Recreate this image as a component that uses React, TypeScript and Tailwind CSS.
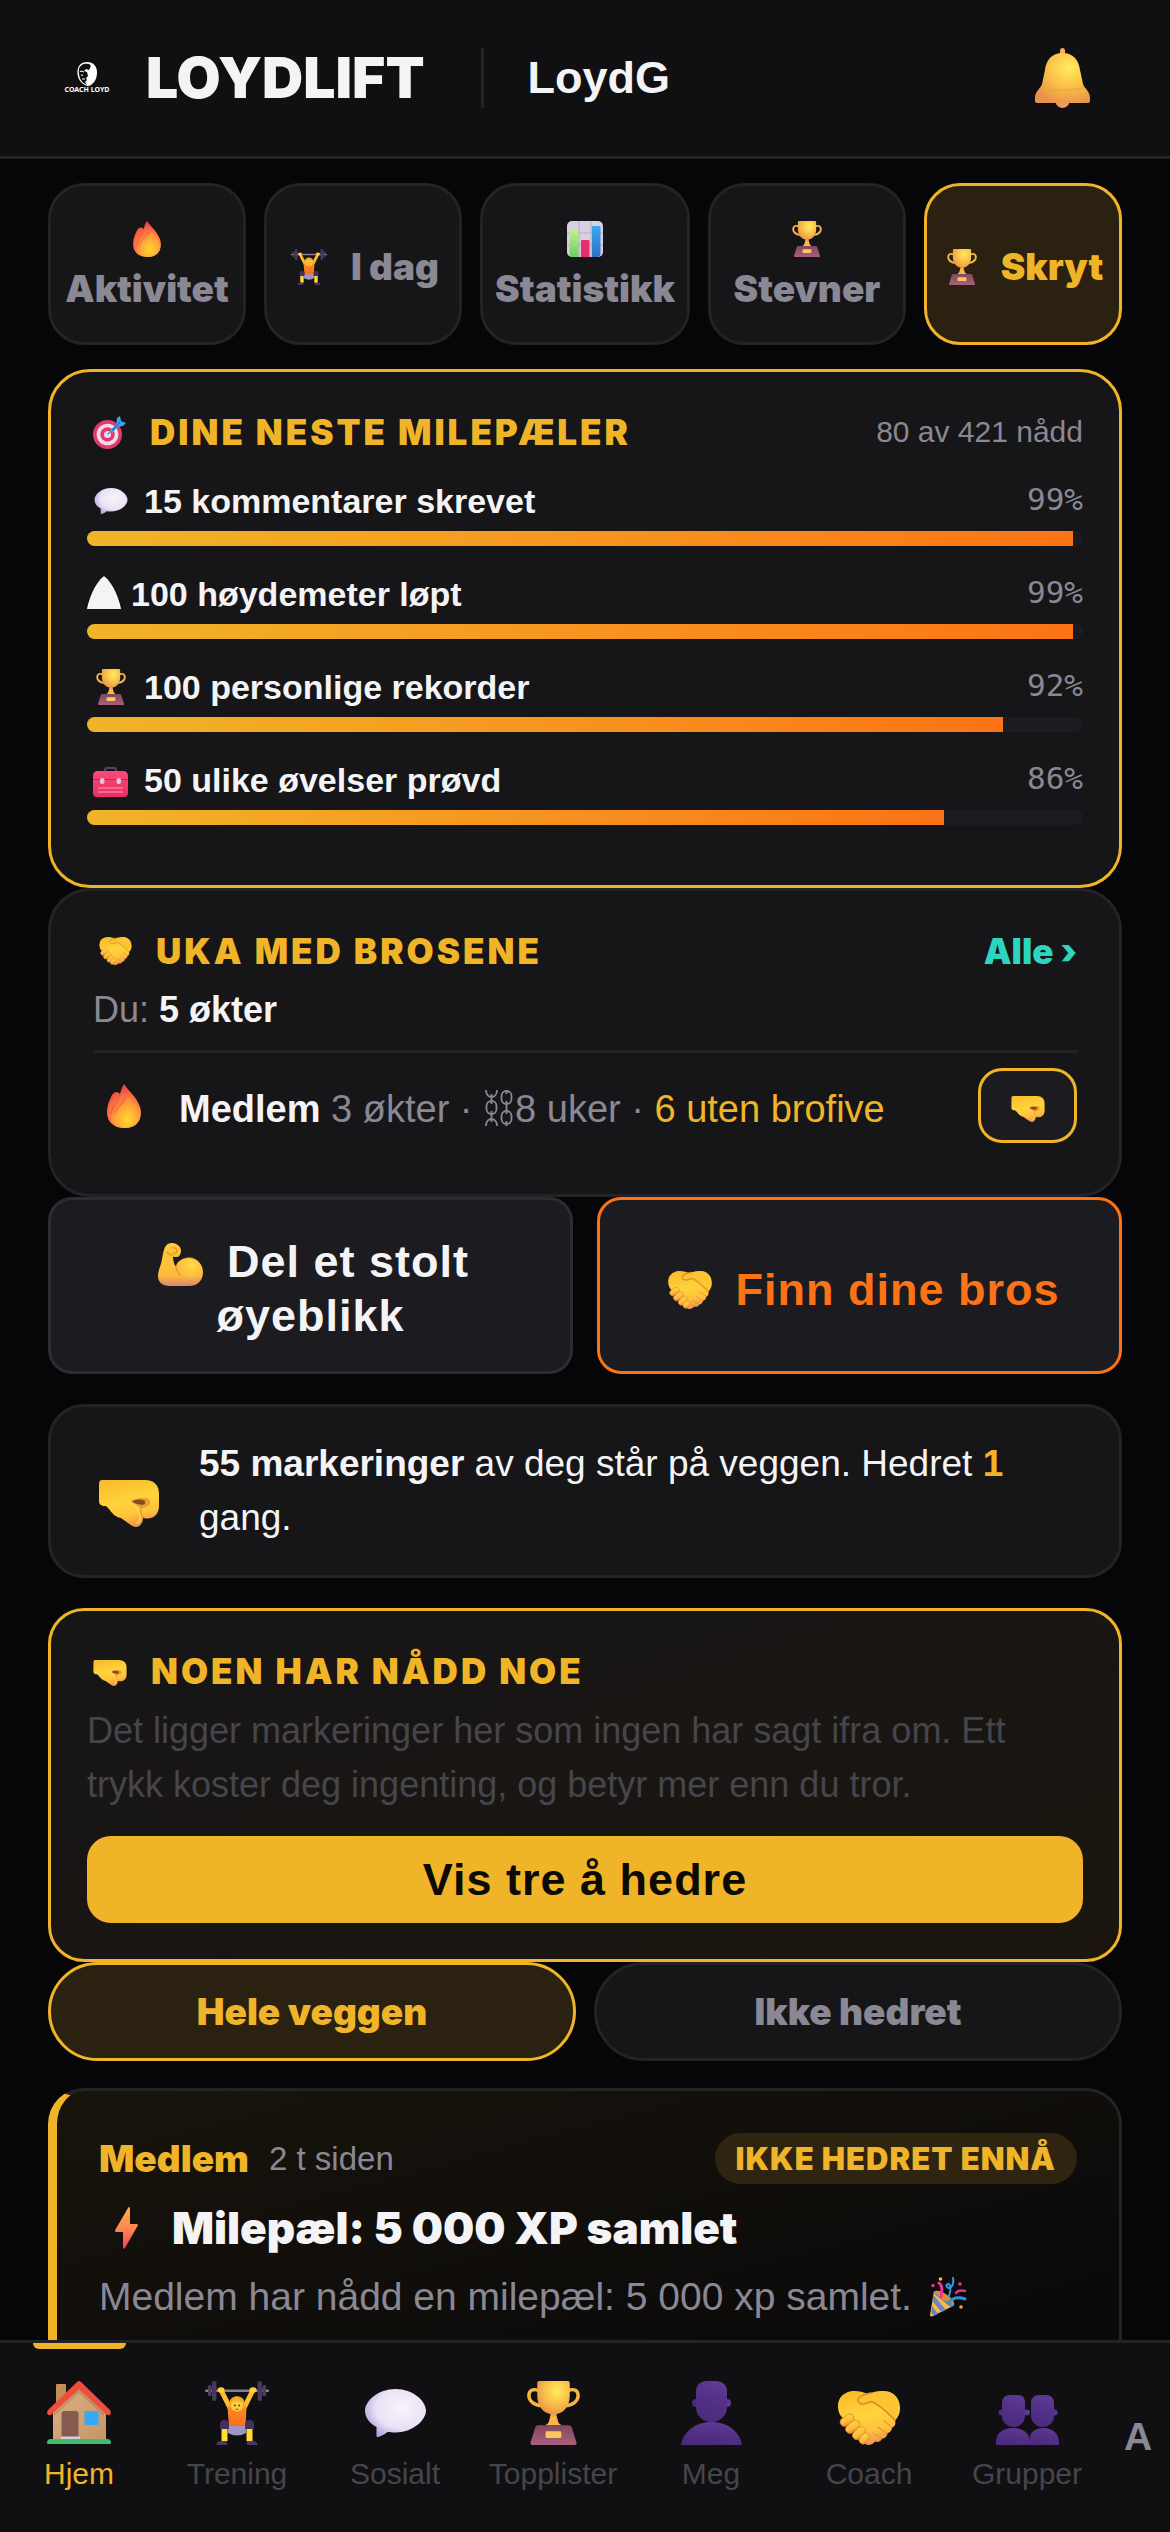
import type { ReactNode } from "react";

type ArtProps = { className: string };

const ARIAL = "font-['Liberation_Sans',Arial,sans-serif]";
const BLACK = "font-['Inter',sans-serif] font-black";

/* Gradients shared by every pictogram on the page. */
function Gradients() {
  return (
    <svg className="absolute h-0 w-0" aria-hidden="true">
      <defs>
        <radialGradient id="gold" cx="0.62" cy="0.3" r="0.75">
          <stop offset="0" stopColor="#ffec5e" />
          <stop offset="0.5" stopColor="#fbc149" />
          <stop offset="1" stopColor="#e8924a" />
        </radialGradient>
        <linearGradient id="skin" x1="0.3" y1="0" x2="0.6" y2="1">
          <stop offset="0" stopColor="#f8bd2b" />
          <stop offset="0.45" stopColor="#ffd33c" />
          <stop offset="0.75" stopColor="#ffc23b" />
          <stop offset="1" stopColor="#ef8f55" />
        </linearGradient>
        <linearGradient id="finger" x1="0.7" y1="0" x2="0.3" y2="1">
          <stop offset="0" stopColor="#ffd83f" />
          <stop offset="0.6" stopColor="#ffba3a" />
          <stop offset="1" stopColor="#ee8a4c" />
        </linearGradient>
        <radialGradient id="muscle" cx="0.6" cy="0.35" r="0.6">
          <stop offset="0" stopColor="#ffe04a" />
          <stop offset="1" stopColor="#ffc83d" stopOpacity="0" />
        </radialGradient>
        <linearGradient id="arm" x1="0.5" y1="0" x2="0.5" y2="1">
          <stop offset="0" stopColor="#ffc937" />
          <stop offset="0.75" stopColor="#fdbb3c" />
          <stop offset="1" stopColor="#d98672" />
        </linearGradient>
        <radialGradient id="fire" cx="0.6" cy="0.85" r="0.8">
          <stop offset="0" stopColor="#ffd62e" />
          <stop offset="0.4" stopColor="#ff9b3a" />
          <stop offset="0.75" stopColor="#fb6b45" />
          <stop offset="1" stopColor="#e9453f" />
        </radialGradient>
        <radialGradient id="fireCore" cx="0.55" cy="0.7" r="0.6">
          <stop offset="0" stopColor="#ffd92f" />
          <stop offset="1" stopColor="#ff8f3e" />
        </radialGradient>
        <radialGradient id="cloud" cx="0.6" cy="0.4" r="0.65">
          <stop offset="0" stopColor="#f8f3fc" />
          <stop offset="0.65" stopColor="#eae2f5" />
          <stop offset="1" stopColor="#b9a3dd" />
        </radialGradient>
        <linearGradient id="plinth" x1="0" y1="0" x2="0" y2="1">
          <stop offset="0" stopColor="#82485d" />
          <stop offset="1" stopColor="#a6617c" />
        </linearGradient>
        <linearGradient id="purple" x1="0.6" y1="0" x2="0.3" y2="1">
          <stop offset="0" stopColor="#5f3a95" />
          <stop offset="0.5" stopColor="#523085" />
          <stop offset="1" stopColor="#4b2a7e" />
        </linearGradient>
        <linearGradient id="wall" x1="0" y1="0" x2="1" y2="1">
          <stop offset="0" stopColor="#dcb083" />
          <stop offset="1" stopColor="#c69567" />
        </linearGradient>
        <linearGradient id="bolt" x1="0.5" y1="0" x2="0.5" y2="1">
          <stop offset="0" stopColor="#ffb04a" />
          <stop offset="0.55" stopColor="#ff8350" />
          <stop offset="1" stopColor="#ee4058" />
        </linearGradient>
        <linearGradient id="pink" x1="0" y1="0" x2="0" y2="1">
          <stop offset="0" stopColor="#fa4a78" />
          <stop offset="1" stopColor="#e52f60" />
        </linearGradient>
        <linearGradient id="shirt" x1="0" y1="0" x2="0" y2="1">
          <stop offset="0" stopColor="#ff8a2a" />
          <stop offset="1" stopColor="#fb6d1d" />
        </linearGradient>
        <linearGradient id="green" x1="0" y1="0" x2="0" y2="1">
          <stop offset="0" stopColor="#c5f08a" />
          <stop offset="1" stopColor="#69cf62" />
        </linearGradient>
        <linearGradient id="blue" x1="0" y1="0" x2="0" y2="1">
          <stop offset="0" stopColor="#3aaaf2" />
          <stop offset="1" stopColor="#2c6fc4" />
        </linearGradient>
      </defs>
    </svg>
  );
}

function Bell({ className }: ArtProps) {
  return (
    <svg viewBox="0 0 55 60" className={className} aria-hidden="true">
      <circle cx="27.5" cy="53" r="7" fill="#ee9a63" />
      <rect x="25" y="0" width="5" height="10" rx="2.5" fill="#f5b04c" />
      <path d="M27.500 5C38 5 44 12 45 22l3 14c1 4 7 7 7 14v3q0 2-2 2H2q-2 0-2-2v-3c0-7 6-10 7-14l3-14C11 12 17 5 27.500 5z" fill="url(#gold)" />
      <path d="M6 40c12 3 31 3 43 0" stroke="#f0a43f" strokeWidth="2" fill="none" opacity="0.7" />
    </svg>
  );
}

function Flame({ className }: ArtProps) {
  return (
    <svg viewBox="0 0 34 44" className={className} aria-hidden="true">
      <path d="M17 0c4 6 9 10 12 15 4 6 5 10 5 14 0 9-7 15-17 15S0 38 0 28C0 22 2 17 4 13c1-3 3-5 6-5 1 0 2 1 3 2 1-4 2-7 4-10z" fill="url(#fire)" />
      <path d="M16 20c3-3 5-6 6-8 6 8 11 14 11 20 0 7-6 12-14 12S5 39 5 33c0-5 6-8 11-13z" fill="url(#fireCore)" opacity="0.85" />
      <path d="M13 10c0 7-8 11-9 20M18 14c-2 6-8 9-10 16" stroke="#e85a33" strokeWidth="1.200" fill="none" opacity="0.6" />
    </svg>
  );
}

function Lifter({ className }: ArtProps) {
  return (
    <svg viewBox="0 0 64 64" className={className} aria-hidden="true">
      <rect x="0" y="8.500" width="64" height="2.500" rx="1" fill="#8a7b9c" />
      <rect x="3" y="4" width="3.500" height="11" rx="1.500" fill="#4d3e63" />
      <rect x="7" y="0" width="4.500" height="20" rx="2" fill="#463860" />
      <rect x="57.500" y="4" width="3.500" height="11" rx="1.500" fill="#4d3e63" />
      <rect x="52.500" y="0" width="4.500" height="20" rx="2" fill="#463860" />
      <path d="M16 9l9 18M48 9l-9 18" stroke="#fbbd2c" strokeWidth="5" strokeLinecap="round" />
      <rect x="12.500" y="6.500" width="7" height="5" rx="2.500" fill="#ffd23d" />
      <rect x="44.500" y="6.500" width="7" height="5" rx="2.500" fill="#ffd23d" />
      <path d="M22.500 26q9.500-4 19 0l-1 20H24z" fill="url(#shirt)" />
      <path d="M23 45h18v7q-9 5-18 0z" fill="#a094c2" />
      <path d="M24.500 22c0-9 15-9 15 0 0 3-1 6-3 7h-9c-2-1-3-4-3-7z" fill="#f2a32a" />
      <circle cx="32" cy="24.500" r="6" fill="#ffcf3a" />
      <path d="M25.500 22c1-6 12-6 13 0-4-2-9-2-13 0z" fill="#f6b02c" />
      <circle cx="29.800" cy="24.500" r="0.900" fill="#5b3a20" />
      <circle cx="34.200" cy="24.500" r="0.900" fill="#5b3a20" />
      <path d="M30.300 28q1.700 1 3.400 0" stroke="#9c4a1c" strokeWidth="0.900" fill="none" />
      <path d="M15 48v-4q0-5 4.500-5t4.500 5v4zM40 48v-4q0-5 4.500-5t4.500 5v4z" fill="#43305f" />
      <rect x="16.500" y="48" width="6" height="12" fill="#ffdd35" />
      <rect x="41.500" y="48" width="6" height="12" fill="#ffdd35" />
      <path d="M11.500 64q0-4 5-4h5.500v4zM52.500 64q0-4-5-4H42v4z" fill="#4a3670" />
    </svg>
  );
}

function Chart({ className }: ArtProps) {
  return (
    <svg viewBox="0 0 36 36" className={className} aria-hidden="true">
      <rect width="36" height="36" rx="5" fill="#d9cfe2" />
      <path d="M12 0v36M24 0v36M0 12h36M0 24h36" stroke="#b6a9c6" strokeWidth="1" />
      <path d="M2.500 10q0-1 1-1h7q1 0 1 1v26H5q-2.500-.500-2.500-3z" fill="url(#green)" />
      <path d="M14 36V20q0-1 1-1h6.500q1 0 1 1v16z" fill="#e2306c" />
      <path d="M25 6q0-1 1-1h6.500q1 0 1 1v27q0 2-2.500 3h-6z" fill="url(#blue)" />
    </svg>
  );
}

function Trophy({ className }: ArtProps) {
  return (
    <svg viewBox="0 0 53 65" className={className} aria-hidden="true">
      <path d="M12 10C5 7 1.500 10 1.500 15S7 25 15 25M41 10c7-3 10.500 0 10.500 5S46 25 38 25" stroke="#f6b544" strokeWidth="3.500" fill="none" />
      <path d="M21 45l3-13h5l3 13z" fill="#f5a94a" />
      <path d="M10 2q0-2 2-2h29q2 0 2 2v13c0 11-7 19-16.500 19S10 26 10 15z" fill="url(#gold)" />
      <path d="M18 45c4-2 5-5 6-9h5c1 4 2 7 6 9z" fill="#f9b74a" />
      <path d="M8 47q.500-2 3-2h31q2.500 0 3 2l5 16q0 2-2 2H5q-2 0-2-2z" fill="url(#plinth)" />
      <rect x="18.500" y="51" width="16" height="7" rx="1.500" fill="#fcc65f" />
    </svg>
  );
}

function Target({ className }: ArtProps) {
  return (
    <svg viewBox="0 0 33 33" className={className} aria-hidden="true">
      <circle cx="14.500" cy="18.500" r="14.500" fill="#e23a6d" />
      <circle cx="14.500" cy="18.500" r="10.800" fill="#f0dcec" />
      <circle cx="14.500" cy="18.500" r="7.200" fill="#e23a6d" />
      <circle cx="14.500" cy="18.500" r="3.500" fill="#f0dcec" />
      <path d="M14.500 18.500L24 9" stroke="#6f8fc7" strokeWidth="1.600" />
      <path d="M17 14l6-5 1-7 3-2 1 5 5 2-3 3-6 1-4 6z" fill="#3ea3ee" />
      <path d="M19 15l8-9" stroke="#1f74cc" strokeWidth="1.200" />
    </svg>
  );
}

function Bubble({ className }: ArtProps) {
  return (
    <svg viewBox="0 0 61 48" className={className} aria-hidden="true">
      <path d="M30.500 0C48 0 61 12 61 21.500S48 43.500 30.500 43.500c-3 0-6-.500-8-.500-3 2.500-6 4-9.500 5q-1.500.500-1.500-1.500v-8.500C4 34 0 28 0 21.500 0 12 13 0 30.500 0z" fill="url(#cloud)" />
    </svg>
  );
}

function Mountain({ className }: ArtProps) {
  return (
    <svg viewBox="0 0 34 33" className={className} aria-hidden="true">
      <path d="M17 0c5 4 9 10 12 17 2 5 4 10 5 16H0c1-6 3-11 5-16C8 10 12 4 17 0z" fill="#f4f4f6" />
    </svg>
  );
}

function Chains({ className }: ArtProps) {
  return (
    <svg viewBox="0 0 28 36" className={className} fill="none" stroke="currentColor" strokeWidth="1.800" aria-hidden="true">
      <path d="M1 0c0 5 3 7 5.500 7S12 5 12 0M1 36c0-5 3-7 5.500-7s5.500 2 5.500 7" />
      <rect x="1.500" y="11" width="10" height="13" rx="5" />
      <path d="M6.500 4v10M6.500 21v11" />
      <rect x="16.500" y="1" width="10" height="13" rx="5" />
      <rect x="16.500" y="21" width="10" height="13" rx="5" />
      <path d="M21.500 11v13M21.500 0v4M21.500 31v5" />
    </svg>
  );
}

function Toolbox({ className }: ArtProps) {
  return (
    <svg viewBox="0 0 35 30" className={className} aria-hidden="true">
      <path d="M12 5V3q0-2 2-2h7q2 0 2 2v2" stroke="#574366" strokeWidth="2" fill="none" />
      <path d="M0 9q0-5 5-5h25q5 0 5 5v17q0 4-4 4H4q-4 0-4-4z" fill="url(#pink)" />
      <path d="M0 12.500h35" stroke="#c22a56" strokeWidth="1" />
      <rect x="7" y="11" width="4.500" height="6" rx="2" fill="#e9c3d8" />
      <rect x="23.500" y="11" width="4.500" height="6" rx="2" fill="#e9c3d8" />
      <path d="M5 21h25M5 25h25" stroke="#ffa0ba" strokeWidth="1.200" />
    </svg>
  );
}

function Handshake({ className }: ArtProps) {
  return (
    <svg viewBox="0 0 62 54" className={className} aria-hidden="true">
      <path d="M8 2C13-1 22-.500 30 3c8-3.500 18-4 23-1.500 6 3 9 9 9 16 0 5-2 9-5 12 1 3 0 6-3 7 0 3-2 5-5 6 0 3-2 5-5 5-1 3-4 4-7 3-2 3-6 4-9 3L6 28C2 25 0 21 0 15 0 9 3 4 8 2z" fill="url(#skin)" />
      <path d="M35 3c9-3 20-3 24 6 3 8 1 13-3 18-6-8-13-13-20-17-4 0-7 3-11 2-3-1-3-3 0-5z" fill="#fbc231" opacity="0.8" />
      <path d="M33 2c-6 1-11 3-13 6-1 3 2 5 5 5 4 0 6-3 10-2 8 4 14 10 22 18" stroke="#dc8a2b" strokeWidth="1.600" fill="none" strokeLinecap="round" />
      <g stroke="#e1892f" strokeWidth="0.800" fill="url(#finger)">
        <rect x="1.500" y="25" width="15" height="8.500" rx="4.200" transform="rotate(-35 9 29)" />
        <rect x="7" y="31.500" width="16" height="8.500" rx="4.200" transform="rotate(-38 15 36)" />
        <rect x="13.500" y="38" width="15" height="8.500" rx="4.200" transform="rotate(-42 21 42)" />
        <rect x="20.500" y="43.500" width="12" height="8" rx="4" transform="rotate(-48 26.500 47.500)" />
      </g>
      <path d="M46 30l8 6M40 36l9 7M35 42l8 5" stroke="#e59a2f" strokeWidth="1.300" strokeLinecap="round" />
    </svg>
  );
}

function Fist({ className }: ArtProps) {
  return (
    <svg viewBox="0 0 60 47" className={className} aria-hidden="true">
      <path d="M3 0h43c9 0 14 5 14 14v12c0 8-5 12.500-12 12.500-2 0-3-.500-4-.500 0 5-3 9-7 9-3 0-5-2-8-4l-7-5c-6-1-9-5-12-9l-3-3c-2 0-4 0-5-1-2-1-2-3-2-5V4q0-4 3-4z" fill="url(#skin)" />
      <path d="M32 22c0-3 6-4 14-4 3 0 6 2 5 6-2 3-6 3-9 5-3-3-6-5-10-7z" fill="#eba12d" />
      <path d="M33 22c4-3 9-3 13-1v3c-4 2-8 0-13-2z" fill="#8a4720" />
      <path d="M44 38c-3-4-3-9-1-12" stroke="#e7952f" strokeWidth="1.500" fill="none" />
      <path d="M31 22c4 3 8 6 10 13 1 4-1 8-4 8" stroke="#ffd95a" strokeWidth="2" fill="none" opacity="0.7" />
    </svg>
  );
}

function Biceps({ className }: ArtProps) {
  return (
    <svg viewBox="0 0 45 43" className={className} aria-hidden="true">
      <path d="M9 1.500c3-2 7-2 10 0 4 2 5 7 3 10-1 3-4 3-7 2 0 4 1 8 3 10 1-5 6-8.500 12-8.500 9 0 15 6 15 14S40 43 31 43H12C4 43 0 39 0 33c0-6 3-10 4-17 1-5 2-12 5-14.500z" fill="url(#arm)" />
      <circle cx="31" cy="26" r="12" fill="url(#muscle)" />
      <path d="M14 12c-2 0-4-1-5-3M14 5c3-1 5 1 5 3s-2 3-4 2M18 24c1 4 2 6 4 8" stroke="#e5982a" strokeWidth="1.300" fill="none" strokeLinecap="round" />
    </svg>
  );
}

function Bolt({ className }: ArtProps) {
  return (
    <svg viewBox="0 0 23 42" className={className} aria-hidden="true">
      <path d="M13 1q1.500-2 2 .500V17h7q1.500.500.500 2L10 41q-2 2-2-1V25H1q-1.500 0-.800-2z" fill="url(#bolt)" />
    </svg>
  );
}

function Party({ className }: ArtProps) {
  return (
    <svg viewBox="0 0 37 40" className={className} aria-hidden="true">
      <path d="M4 14l20 12q1 2-1 3L2 39.500Q0 40 0 38z" fill="#fcb93f" />
      <path d="M3.500 18L16 33l-4.500 2.200L2.500 24zM5 14.500L24 27q0 2-3 3.500L4.500 17zM2 29l6 8-4 2-3-4z" fill="#4c7be0" opacity="0.85" />
      <path d="M5 14c5-2 18 6 19 12-6 1-17-6-19-12z" fill="#d9902e" />
      <path d="M9 6c4 2 3 9 2 14" stroke="#f0349a" strokeWidth="3" fill="none" strokeLinecap="round" />
      <path d="M23 1c1 5-1 10-4 10-2 0-4-3-1-4 3 0 3 6 1 12" stroke="#2f9ae8" strokeWidth="2" fill="none" strokeLinecap="round" />
      <path d="M26 16c2-3 5-3 9-2" stroke="#e63299" strokeWidth="2.500" fill="none" strokeLinecap="round" />
      <path d="M18 26c5-6 11-6 17-4" stroke="#2f8fe0" strokeWidth="3" fill="none" strokeLinecap="round" />
      <circle cx="10.500" cy="2" r="1.800" fill="#f9c23c" />
      <circle cx="30" cy="7" r="1.800" fill="#e63299" />
      <circle cx="3" cy="8.500" r="1.700" fill="#e63299" />
      <circle cx="31" cy="30" r="1.800" fill="#f9a63c" />
    </svg>
  );
}

function House({ className }: ArtProps) {
  return (
    <svg viewBox="0 0 64 64" className={className} aria-hidden="true">
      <rect x="9" y="3" width="10" height="24" rx="1" fill="#c28d58" />
      <path d="M6 30L32 6l27 24v30H6z" fill="url(#wall)" />
      <path d="M32 9l25 23v3L32 12 7 35v-3z" fill="#a96c48" opacity="0.4" />
      <path d="M30 1q2-2 4 0l29 28q1.500 2 .500 4t-3.500 1L32 8.500 4 34q-2.500 1-3.500-1t.500-4z" fill="#ee4f3a" />
      <path d="M14.500 33q0-3 3-3h11q3 0 3 3v24h-17z" fill="#855d50" />
      <circle cx="28" cy="43" r="1.200" fill="#a8413c" />
      <rect x="14" y="55.500" width="19" height="2.500" fill="#d6cedf" />
      <rect x="37.500" y="30" width="14" height="14" rx="1.500" fill="#34a9f6" />
      <path d="M0 62q0-4 4-4h56q4 0 4 4 0 1-1 1H1q-1 0-1-1z" fill="#41bd6c" />
    </svg>
  );
}

function Person({ className }: ArtProps) {
  return (
    <svg viewBox="0 0 61 64" className={className} aria-hidden="true">
      <circle cx="15" cy="22" r="4" fill="#4a2a7c" />
      <circle cx="46" cy="22" r="4" fill="#5c3891" />
      <path d="M15 10C15 4 20 0 26 0h9c6 0 11 4 11 10v16c0 8-6 15-15.500 15S15 34 15 26z" fill="url(#purple)" />
      <path d="M0 64c2-13 14-23 30.500-23S59 51 61 64z" fill="url(#purple)" />
    </svg>
  );
}

function Group({ className }: ArtProps) {
  return (
    <svg viewBox="0 0 63 50" className={className} aria-hidden="true">
      <circle cx="5.500" cy="17.500" r="3" fill="#4a2a7c" />
      <circle cx="31" cy="17.500" r="3" fill="#5c3891" />
      <circle cx="58.500" cy="17.500" r="3" fill="#5c3891" />
      <path d="M6 8c0-5 3-8 8-8h8c5 0 7 3 7 8v13c0 6-5 11-11.500 11S6 27 6 21z" fill="url(#purple)" />
      <path d="M35 8c0-5 3-8 8-8h7c5 0 8 3 8 8v13c0 6-5 11-11.500 11S35 27 35 21z" fill="url(#purple)" />
      <path d="M34 50V40c2-4 7-7 13-7 9 0 16 5 16 15v2z" fill="url(#purple)" />
      <path d="M0 50v-3c0-9 7-14 17-14s17 5 17 14v3z" fill="url(#purple)" />
    </svg>
  );
}

function CoachLogo() {
  return (
    <div className="flex w-[46px] flex-col items-center text-white" role="img" aria-label="Coach Loyd">
      <svg viewBox="0 0 20 24" className="h-6 w-5" aria-hidden="true">
        <path d="M10 0c6 0 10 4 10 10 0 6-2 10-6 13-2 1.300-4 1.300-6 0C4 21 1 17 .500 12 0 5 3 0 10 0z" fill="#fff" />
        <path d="M2 7c1-4 5-6 10-5 2 1 2 2 1 4l-1 2-3-1-2 2 3 1 1 4-2 2 1 2-2 2 2 3C5 21 1 16 2 7z" fill="#101012" />
        <path d="M3 9.500q2-1 4 .500M4 13l2 .500M5 17h3" stroke="#fff" strokeWidth="1" fill="none" />
      </svg>
      <span className="font-['Noto_Sans',sans-serif] text-[7px] leading-[8px] font-bold whitespace-nowrap">COACH LOYD</span>
    </div>
  );
}

type Tab = { label: string; art: ReactNode; stacked: boolean; active?: boolean };

const tabs: Tab[] = [
  { label: "Aktivitet", art: <Flame className="h-9 w-7" />, stacked: true },
  { label: "I dag", art: <Lifter className="h-9 w-9" />, stacked: false },
  { label: "Statistikk", art: <Chart className="h-9 w-9" />, stacked: true },
  { label: "Stevner", art: <Trophy className="h-9 w-[30px]" />, stacked: true },
  { label: "Skryt", art: <Trophy className="h-9 w-[30px]" />, stacked: false, active: true },
];

const milestones = [
  { label: "15 kommentarer skrevet", percent: 99, art: <Bubble className="mr-4 ml-[7px] h-[26px] w-[34px]" /> },
  { label: "100 høydemeter løpt", percent: 99, art: <Mountain className="mr-2.5 mb-1 h-[33px] w-[34px]" /> },
  { label: "100 personlige rekorder", percent: 92, art: <Trophy className="mr-[18px] ml-[9px] h-9 w-[30px]" /> },
  { label: "50 ulike øvelser prøvd", percent: 86, art: <Toolbox className="mt-1 mr-4 ml-1.5 h-[30px] w-[35px]" /> },
];

const navItems = [
  { label: "Hjem", art: <House className="h-16 w-16" /> },
  { label: "Trening", art: <Lifter className="h-16 w-16" /> },
  { label: "Sosialt", art: <Bubble className="mb-2 h-12 w-[61px]" /> },
  { label: "Topplister", art: <Trophy className="h-16 w-[53px]" /> },
  { label: "Meg", art: <Person className="h-16 w-[61px]" /> },
  { label: "Coach", art: <Handshake className="h-[54px] w-[62px]" /> },
  { label: "Grupper", art: <Group className="h-[50px] w-[63px]" /> },
];

function CardTitle({ art, children }: { art: ReactNode; children: ReactNode }) {
  return (
    <h2 className={`${BLACK} flex items-center text-[35px] leading-[48px] tracking-[3px] whitespace-nowrap text-[#f0b429] uppercase`}>
      <span className="mr-6 ml-1.5 flex">{art}</span>
      {children}
    </h2>
  );
}

export default function App() {
  return (
    <div className={`${ARIAL} flex h-screen flex-col overflow-hidden bg-[#060608] text-[#f4f4f6]`}>
      <Gradients />

      <header className="flex shrink-0 items-center border-b-3 border-[#232326] bg-[#101012] py-12 pr-20 pl-16">
        <CoachLogo />
        <h1 className={`${BLACK} ml-9 text-[57px] leading-[60px]`}>LOYDLIFT</h1>
        <div className="ml-14 h-15 w-[3px] bg-[#232326]" />
        <span className="ml-11 text-[45px] leading-[60px] font-bold">LoydG</span>
        <button type="button" aria-label="Varsler" className="ml-auto">
          <Bell className="h-15 w-[55px]" />
        </button>
      </header>

      <main className="min-h-0 flex-1 overflow-hidden px-12 pt-6">
        <div role="tablist" className="mb-6 grid grid-cols-[33fr_33fr_35fr_33fr_33fr] gap-[18px]">
          {tabs.map((tab) => (
            <button
              key={tab.label}
              type="button"
              role="tab"
              aria-selected={tab.active === true}
              className={`${BLACK} flex min-h-[162px] items-center justify-center rounded-[36px] border-3 pt-1.5 text-[37px] leading-[48px] whitespace-nowrap ${
                tab.stacked ? "flex-col gap-2" : "flex-row gap-6 pl-1"
              } ${tab.active ? "border-[#f0b429] bg-[#2a2110] text-[#f0b429]" : "border-[#232326] bg-[#161618] text-[#8a8894]"}`}
            >
              {tab.art}
              <span>{tab.label}</span>
            </button>
          ))}
        </div>

        <section className="rounded-[42px] border-3 border-[#f0b429] bg-[#161618] p-9">
          <div className="mb-[21px] flex items-center justify-between">
            <CardTitle art={<Target className="h-[33px] w-[33px]" />}>Dine neste milepæler</CardTitle>
            <span className="text-[30px] leading-[48px] text-[#8a8894]">80 av 421 nådd</span>
          </div>
          <ul>
            {milestones.map((item) => (
              <li key={item.label} className="mb-6">
                <div className="mb-1.5 flex items-center">
                  {item.art}
                  <span className="text-[34px] leading-[48px] font-bold">{item.label}</span>
                  <span className="mb-1 ml-auto font-['DejaVu_Sans_Mono',monospace] text-[31px] leading-[44px] text-[#8a8894]">{item.percent}%</span>
                </div>
                <div className="h-[15px] overflow-hidden rounded-lg bg-[#1c1c20]" role="progressbar" aria-label={item.label} aria-valuenow={item.percent}>
                  <div className="h-full bg-linear-to-r from-[#f0b429] to-[#fb7316]" style={{ width: `${item.percent}%` }} />
                </div>
              </li>
            ))}
          </ul>
        </section>

        <section className="rounded-[42px] border-3 border-[#232326] bg-[#161618] px-[42px] py-9">
          <div className="flex items-center justify-between">
            <CardTitle art={<Handshake className="h-7 w-[33px]" />}>Uka med brosene</CardTitle>
            <a href="#bros" className={`${BLACK} text-[35px] leading-[48px] text-[#2dd4bf]`}>
              Alle ›
            </a>
          </div>
          <p className="mt-2 mb-[13px] text-[36px] leading-[54px] text-[#8a8894]">
            Du: <strong className="text-[#f4f4f6]">5 økter</strong>
          </p>
          <div className="flex items-center border-t-3 border-[#232326] py-[15px]">
            <Flame className="ml-3.5 h-11 w-[34px]" />
            <p className="ml-[38px] pt-1.5 text-[38px] leading-[54px] whitespace-nowrap text-[#8a8894]">
              <strong className="text-[#f4f4f6]">Medlem</strong> 3 økter · <Chains className="mr-0.5 ml-0.5 inline-block h-9 w-7 align-[-4px]" />8 uker ·{" "}
              <span className="text-[#f0b429]">6 uten brofive</span>
            </p>
            <button type="button" aria-label="Gi brofive" className="ml-auto flex h-[75px] w-[99px] items-center justify-center rounded-3xl border-3 border-[#f0b429] bg-[#1c1c20] pt-1.5">
              <Fist className="h-[26px] w-[34px]" />
            </button>
          </div>
        </section>

        <div className="mb-[30px] grid grid-cols-2 gap-6">
          <button type="button" className="min-h-[177px] rounded-3xl border-3 border-[#2c2c31] bg-[#1c1c20] px-20 pt-1.5 text-[45px] leading-[54px] font-bold tracking-[1px]">
            <Biceps className="mr-6 ml-1.5 inline-block h-[43px] w-[45px] align-[-9px]" />
            Del et stolt øyeblikk
          </button>
          <button type="button" className="flex min-h-[177px] items-center justify-center rounded-3xl border-3 border-[#fb7316] bg-[#1c1c20] pt-2 pl-2 text-[45px] leading-[54px] font-bold tracking-[1px] whitespace-nowrap text-[#fb7316]">
            <Handshake className="mr-6 h-[38px] w-11" />
            Finn dine bros
          </button>
        </div>

        <section className="mb-[30px] flex items-center rounded-[36px] border-3 border-[#232326] bg-[#161618] px-12 py-[30px]">
          <Fist className="mt-6 mr-10 h-[47px] w-15 shrink-0" />
          <p className="text-[37px] leading-[54px]">
            <strong>55 markeringer</strong> av deg står på veggen. Hedret <strong className="text-[#f0b429]">1</strong> gang.
          </p>
        </section>

        <section className="rounded-[36px] border-3 border-[#f0b429] bg-linear-to-br from-[#161618] to-[#1b150d] p-9">
          <CardTitle art={<Fist className="mt-1 h-[26px] w-[34px]" />}>Noen har nådd noe</CardTitle>
          <p className="mt-[9px] mb-6 text-[36px] leading-[54px] text-[#46454c]">
            Det ligger markeringer her som ingen har sagt ifra om. Ett trykk koster deg ingenting, og betyr mer enn du tror.
          </p>
          <button type="button" className="h-[87px] w-full rounded-3xl bg-[#f0b429] text-[45px] leading-[54px] font-bold tracking-[1px] text-[#0c0a05]">
            Vis tre å hedre
          </button>
        </section>

        <div className={`${BLACK} mb-[27px] grid grid-cols-2 gap-[18px] text-[37px] leading-[48px]`}>
          <button type="button" aria-pressed="true" className="h-[99px] rounded-full border-3 border-[#f0b429] bg-[#2a2110] text-[#f0b429]">
            Hele veggen
          </button>
          <button type="button" aria-pressed="false" className="h-[99px] rounded-full border-3 border-[#232326] bg-[#161618] text-[#8a8894]">
            Ikke hedret
          </button>
        </div>

        <article className="rounded-[36px] border-3 border-l-9 border-[#232326] border-l-[#f0b429] bg-linear-to-br from-[#19140b] to-[#08080a] p-[42px]">
          <div className="flex items-center">
            <span className={`${BLACK} text-[37px] leading-[51px] text-[#f0b429]`}>Medlem</span>
            <time className="ml-5 text-[33px] leading-[51px] text-[#8a8894]">2 t siden</time>
            <span className={`${BLACK} ml-auto rounded-full bg-[#2f240f] px-[21px] text-[31px] leading-[51px] tracking-[1px] text-[#f0b429]`}>IKKE HEDRET ENNÅ</span>
          </div>
          <h3 className={`${BLACK} mt-3.5 flex items-center text-[44px] leading-[60px]`}>
            <Bolt className="mr-[34px] ml-4 h-[42px] w-[23px]" />
            Milepæl: 5 000 XP samlet
          </h3>
          <p className="mt-1.5 flex items-center text-[39px] leading-[66px] text-[#8a8894]">
            Medlem har nådd en milepæl: 5 000 xp samlet.
            <Party className="ml-[18px] h-10 w-[37px]" />
          </p>
        </article>
      </main>

      <nav className="flex h-48 shrink-0 overflow-hidden border-t-3 border-[#232326] bg-[#101012] text-[30px] leading-9">
        {navItems.map((item, index) => (
          <a
            key={item.label}
            href={`#${item.label.toLowerCase()}`}
            aria-current={index === 0 ? "page" : undefined}
            className={`relative flex w-[158px] shrink-0 flex-col items-center pt-[37px] ${index === 0 ? "text-[#f0b429]" : "text-[#46454c]"}`}
          >
            {index === 0 && <span className="absolute top-0 h-1.5 w-[93px] rounded-b-md bg-[#f0b429]" />}
            <span className="flex h-[65px] items-end">{item.art}</span>
            <span className="mt-[11px]">{item.label}</span>
          </a>
        ))}
        <a href="#admin" className="w-16 shrink-0 pt-[68px] text-center text-[39px] leading-[51px] font-bold text-[#8a8894]">
          A
        </a>
      </nav>
    </div>
  );
}
